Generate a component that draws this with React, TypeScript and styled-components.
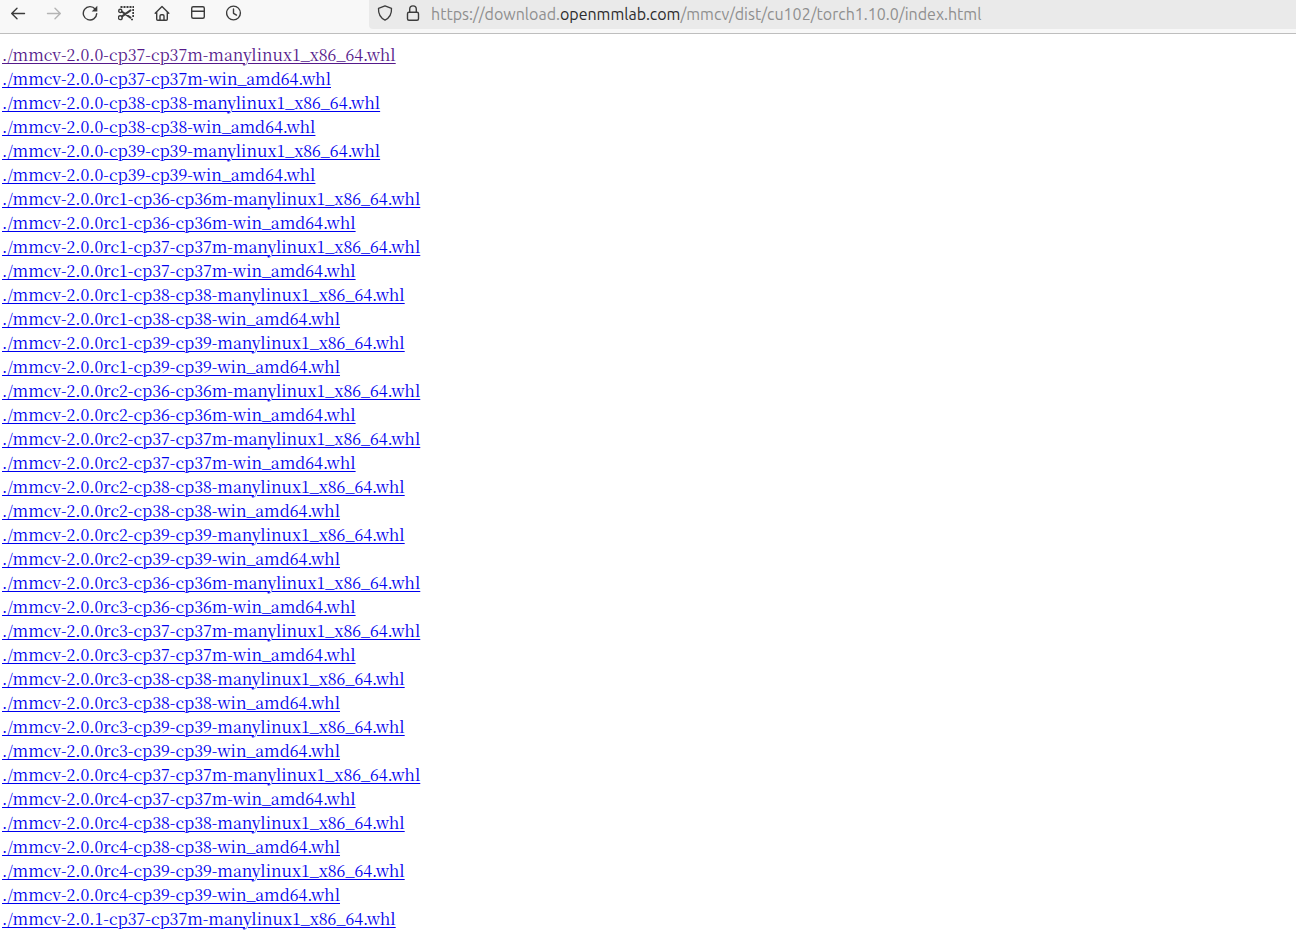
import React from 'react';
import styled, { createGlobalStyle } from 'styled-components';

const GlobalStyle = createGlobalStyle`
  body {
    margin: 0;
    background: #ffffff;
    overflow: hidden;
  }
`;

const Page = styled.div`
  height: 100vh;
  overflow: hidden;
`;

const Toolbar = styled.header`
  display: flex;
  gap: 123px;
  box-sizing: border-box;
  height: 34px;
  padding-left: 6px;
  background: #f8f8f8;
  border-bottom: 1px solid #bebebe;
`;

const ButtonGroup = styled.nav`
  display: flex;
  gap: 12px;
  height: 26px;
`;

const ToolButton = styled.button`
  display: flex;
  align-items: center;
  justify-content: center;
  flex: none;
  width: 24px;
  height: 26px;
  padding: 0;
  border: 0;
  background: none;
  color: #3c3c3c;

  &:disabled {
    color: #b4b4b4;
  }
`;

const AddressBar = styled.div`
  display: flex;
  flex: 1;
  min-width: 0;
  align-items: flex-start;
  gap: 4px;
  box-sizing: border-box;
  height: 29px;
  padding-left: 4px;
  border-bottom-left-radius: 4px;
  background: #eaeaea;
`;

const Address = styled.div`
  padding-left: 2px;
  font: 16px/28px Ubuntu, 'Noto Sans', sans-serif;
  color: #8f8f8f;
  white-space: nowrap;
  outline: none;
`;

const Domain = styled.span`
  color: #2c2c2c;
`;

const FileList = styled.main`
  display: flex;
  flex-direction: column;
  align-items: flex-start;
  padding: 9px 2px;
`;

const FileLink = styled.a<{ $visited?: boolean }>`
  font: 16px/24px 'Source Serif Pro', 'Noto Serif CJK SC', 'Liberation Serif', serif;
  color: ${({ $visited }) => ($visited ? '#551a8b' : '#0000ee')};
  text-decoration: underline 1px;
  text-underline-offset: 2px;
  text-decoration-skip-ink: auto;
  white-space: nowrap;
`;

const Icon = ({ children }: { children: React.ReactNode }) => (
  <svg
    width="16"
    height="16"
    viewBox="0 0 16 16"
    fill="none"
    stroke="currentColor"
    strokeWidth="1.4"
    strokeLinecap="round"
    strokeLinejoin="round"
    aria-hidden="true"
  >
    {children}
  </svg>
);

const tools = [
  { label: 'Back', icon: <path d="M14.5 8.5H1.7M7 3.2 1.7 8.5 7 13.8" /> },
  { label: 'Forward', disabled: true, icon: <path d="M1.5 8.5h12.8M9 3.2l5.3 5.3L9 13.8" /> },
  {
    label: 'Reload',
    icon: (
      <>
        <path d="M13.3 4.2A6.7 6.7 0 1 0 14.7 8.6" />
        <path d="M15.3 .8v5.6H9.7z" fill="currentColor" stroke="none" />
      </>
    ),
  },
  {
    label: 'Screenshot',
    icon: (
      <>
        <path d="M2.5 2H16M15.2 4V13" strokeDasharray="2 1" strokeWidth="1.8" strokeLinecap="butt" />
        <path d="M4 6.7 12.5 12.6M4 11.4 12.5 5.4" strokeWidth="2" />
        <circle cx="2.3" cy="5.9" r="1.6" />
        <circle cx="2.3" cy="12.7" r="1.9" />
        <path d="M13 14.5h2" strokeLinecap="butt" />
      </>
    ),
  },
  {
    label: 'Home',
    icon: <path d="M1.2 8.2 8 1.6l6.8 6.6M2.7 7v7.2q0 1 1 1h8.6q1 0 1-1V7M6 15v-4q0-1.2 1.2-1.2h1.6q1.2 0 1.2 1.2v4" />,
  },
  {
    label: 'Sidebar',
    icon: (
      <>
        <rect x="1.7" y="1.7" width="12.6" height="11.6" rx="1.5" />
        <path d="M1.7 6.3h12.6" />
      </>
    ),
  },
  {
    label: 'History',
    icon: (
      <>
        <circle cx="7.5" cy="8" r="6.9" />
        <path d="M7.5 4v4.3l3 1.8" />
      </>
    ),
  },
];

const builds = (version: string, tags: string[]) =>
  tags.flatMap((tag) => {
    const abi = tag === 'cp36' || tag === 'cp37' ? `${tag}m` : tag;
    return ['manylinux1_x86_64', 'win_amd64'].map(
      (platform) => `./mmcv-${version}-${tag}-${abi}-${platform}.whl`,
    );
  });

const files = [
  ...builds('2.0.0', ['cp37', 'cp38', 'cp39']),
  ...builds('2.0.0rc1', ['cp36', 'cp37', 'cp38', 'cp39']),
  ...builds('2.0.0rc2', ['cp36', 'cp37', 'cp38', 'cp39']),
  ...builds('2.0.0rc3', ['cp36', 'cp37', 'cp38', 'cp39']),
  ...builds('2.0.0rc4', ['cp37', 'cp38', 'cp39']),
  './mmcv-2.0.1-cp37-cp37m-manylinux1_x86_64.whl',
];

export default function App() {
  return (
    <Page>
      <GlobalStyle />
      <Toolbar>
        <ButtonGroup aria-label="Browser controls">
          {tools.map(({ label, icon, disabled }) => (
            <ToolButton key={label} type="button" aria-label={label} disabled={disabled}>
              <Icon>{icon}</Icon>
            </ToolButton>
          ))}
        </ButtonGroup>
        <AddressBar>
          <ToolButton type="button" aria-label="Tracking protection">
            <Icon>
              <path d="M8 .8 14.5 3.3C14.8 8.5 12.3 13 8 15.2 3.7 13 1.2 8.5 1.5 3.3Z" strokeWidth="1.3" />
            </Icon>
          </ToolButton>
          <ToolButton type="button" aria-label="Site information">
            <Icon>
              <rect x="2.5" y="7.2" width="11" height="8" rx="1.5" />
              <path d="M4.7 7V4.2a3.3 3.3 0 0 1 6.6 0V7" />
            </Icon>
          </ToolButton>
          <Address role="textbox" aria-label="Address" tabIndex={0}>
            https://download.<Domain>openmmlab.com</Domain>/mmcv/dist/cu102/torch1.10.0/index.html
          </Address>
        </AddressBar>
      </Toolbar>
      <FileList>
        {files.map((file, index) => (
          <FileLink key={file} href={file} $visited={index === 0}>
            {file}
          </FileLink>
        ))}
      </FileList>
    </Page>
  );
}
